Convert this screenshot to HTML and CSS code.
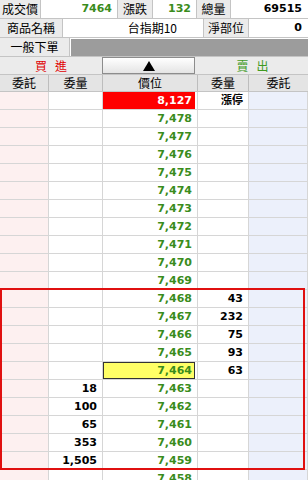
FILE: index.html
```html
<!DOCTYPE html>
<html lang="zh-Hant">
<head>
    <meta charset="UTF-8">
    <meta name="viewport" content="width=device-width, initial-scale=1.0">
    <title>台指期 五檔報價</title>
    <link rel="stylesheet" href="styles.css">
</head>
<body>
    <div class="quote">
        <div class="info-row row-trade">
            <div class="label">成交價</div>
            <div class="value num green">7464</div>
            <div class="label">漲跌</div>
            <div class="value num green">132</div>
            <div class="label">總量</div>
            <div class="value num">69515</div>
        </div>
        <div class="info-row row-product">
            <div class="label">商品名稱</div>
            <div class="value name">台指期10</div>
            <div class="label">淨部位</div>
            <div class="value num">0</div>
        </div>
        <div class="info-row row-order">
            <div class="label">一般下單</div>
            <div class="order-bar"></div>
        </div>
        <div class="side-row">
            <div class="side buy">買&nbsp;&nbsp;&nbsp;進</div>
            <div class="sort-cell"><button class="sort-btn"><span class="arrow-up"></span></button></div>
            <div class="side sell">賣&nbsp;&nbsp;&nbsp;出</div>
        </div>
        <div class="book-head">
            <div>委託</div>
            <div>委量</div>
            <div>價位</div>
            <div>委量</div>
            <div>委託</div>
        </div>

        <div class="book">
            <div class="book-row"><div class="bid-cnt"></div><div class="bid-qty"></div><div class="price"><span class="limit-up">8,127</span></div><div class="ask-qty">漲停</div><div class="ask-cnt"></div></div>
            <div class="book-row"><div class="bid-cnt"></div><div class="bid-qty"></div><div class="price"><span>7,478</span></div><div class="ask-qty"></div><div class="ask-cnt"></div></div>
            <div class="book-row"><div class="bid-cnt"></div><div class="bid-qty"></div><div class="price"><span>7,477</span></div><div class="ask-qty"></div><div class="ask-cnt"></div></div>
            <div class="book-row"><div class="bid-cnt"></div><div class="bid-qty"></div><div class="price"><span>7,476</span></div><div class="ask-qty"></div><div class="ask-cnt"></div></div>
            <div class="book-row"><div class="bid-cnt"></div><div class="bid-qty"></div><div class="price"><span>7,475</span></div><div class="ask-qty"></div><div class="ask-cnt"></div></div>
            <div class="book-row"><div class="bid-cnt"></div><div class="bid-qty"></div><div class="price"><span>7,474</span></div><div class="ask-qty"></div><div class="ask-cnt"></div></div>
            <div class="book-row"><div class="bid-cnt"></div><div class="bid-qty"></div><div class="price"><span>7,473</span></div><div class="ask-qty"></div><div class="ask-cnt"></div></div>
            <div class="book-row"><div class="bid-cnt"></div><div class="bid-qty"></div><div class="price"><span>7,472</span></div><div class="ask-qty"></div><div class="ask-cnt"></div></div>
            <div class="book-row"><div class="bid-cnt"></div><div class="bid-qty"></div><div class="price"><span>7,471</span></div><div class="ask-qty"></div><div class="ask-cnt"></div></div>
            <div class="book-row"><div class="bid-cnt"></div><div class="bid-qty"></div><div class="price"><span>7,470</span></div><div class="ask-qty"></div><div class="ask-cnt"></div></div>
            <div class="book-row"><div class="bid-cnt"></div><div class="bid-qty"></div><div class="price"><span>7,469</span></div><div class="ask-qty"></div><div class="ask-cnt"></div></div>
            <div class="book-row"><div class="bid-cnt"></div><div class="bid-qty"></div><div class="price"><span>7,468</span></div><div class="ask-qty">43</div><div class="ask-cnt"></div></div>
            <div class="book-row"><div class="bid-cnt"></div><div class="bid-qty"></div><div class="price"><span>7,467</span></div><div class="ask-qty">232</div><div class="ask-cnt"></div></div>
            <div class="book-row"><div class="bid-cnt"></div><div class="bid-qty"></div><div class="price"><span>7,466</span></div><div class="ask-qty">75</div><div class="ask-cnt"></div></div>
            <div class="book-row"><div class="bid-cnt"></div><div class="bid-qty"></div><div class="price"><span>7,465</span></div><div class="ask-qty">93</div><div class="ask-cnt"></div></div>
            <div class="book-row"><div class="bid-cnt"></div><div class="bid-qty"></div><div class="price"><span class="last">7,464</span></div><div class="ask-qty">63</div><div class="ask-cnt"></div></div>
            <div class="book-row"><div class="bid-cnt"></div><div class="bid-qty">18</div><div class="price"><span>7,463</span></div><div class="ask-qty"></div><div class="ask-cnt"></div></div>
            <div class="book-row"><div class="bid-cnt"></div><div class="bid-qty">100</div><div class="price"><span>7,462</span></div><div class="ask-qty"></div><div class="ask-cnt"></div></div>
            <div class="book-row"><div class="bid-cnt"></div><div class="bid-qty">65</div><div class="price"><span>7,461</span></div><div class="ask-qty"></div><div class="ask-cnt"></div></div>
            <div class="book-row"><div class="bid-cnt"></div><div class="bid-qty">353</div><div class="price"><span>7,460</span></div><div class="ask-qty"></div><div class="ask-cnt"></div></div>
            <div class="book-row"><div class="bid-cnt"></div><div class="bid-qty">1,505</div><div class="price"><span>7,459</span></div><div class="ask-qty"></div><div class="ask-cnt"></div></div>
            <div class="book-row"><div class="bid-cnt"></div><div class="bid-qty"></div><div class="price"><span>7,458</span></div><div class="ask-qty"></div><div class="ask-cnt"></div></div>

            <!-- five best bid/ask frame -->
            <div class="best-five"></div>
        </div>
    </div>
</body>
</html>
```

FILE: styles.css
```css
* {
    margin: 0;
    padding: 0;
    box-sizing: border-box;
}

body {
    width: 308px;
    height: 480px;
    overflow: hidden;
    background: #ffffff;
    font-family: 'Noto Sans CJK TC', 'DejaVu Sans', sans-serif;
    font-size: 12px;
    color: #000;
}

.quote {
    width: 308px;
}

/* top info rows */
.info-row {
    display: grid;
    height: 19px;
    border-bottom: 1px solid #c4c4c4;
}

.row-trade {
    grid-template-columns: 41px 77px 35px 44px 34px 1fr;
}

.row-product {
    grid-template-columns: 63px 141px 45px 1fr;
}

.row-order {
    grid-template-columns: 70px 1fr;
}

.label {
    background: #ebebeb;
    border-right: 1px solid #c4c4c4;
    text-align: center;
    line-height: 18px;
    white-space: nowrap;
    overflow: hidden;
}

.value {
    background: #ffffff;
    border-right: 1px solid #c4c4c4;
    text-align: right;
    padding-right: 5px;
    line-height: 18px;
    white-space: nowrap;
}

.value:last-child {
    border-right: none;
    padding-right: 6px;
}

.num {
    font-family: 'DejaVu Sans', Verdana, sans-serif;
    font-weight: bold;
    font-size: 11px;
}

.name {
    padding-right: 26px;
}

.green {
    color: #3a8c1c;
}

.order-bar {
    background: #9c9c9c;
    margin: 1px 0 0 1px;
}

/* buy / sell header */
.side-row {
    display: grid;
    grid-template-columns: 102px 95px 1fr;
    height: 18px;
    background: #ebebeb;
    border-bottom: 1px solid #c4c4c4;
}

.side {
    text-align: center;
    line-height: 17px;
}

.buy {
    color: #e00000;
}

.sell {
    color: #3f9a1f;
}

.sort-cell {
    padding-right: 2px;
}

.sort-btn {
    display: flex;
    justify-content: center;
    align-items: center;
    width: 100%;
    height: 17px;
    border: 1px solid #8c8c8c;
    background: linear-gradient(#ffffff, #e4e4e4);
}

.arrow-up {
    width: 0;
    height: 0;
    border-left: 6px solid transparent;
    border-right: 6px solid transparent;
    border-bottom: 10px solid #000;
}

.book-head {
    display: grid;
    grid-template-columns: 49px 54px 95px 51px 1fr;
    height: 17px;
    background: #e4e4e4;
    border-bottom: 1px solid #c4c4c4;
}

.book-head div {
    text-align: center;
    line-height: 16px;
    border-right: 1px solid #bdbdbd;
}

.book-head div:last-child {
    border-right: none;
}

/* order book */
.book {
    position: relative;
}

.book-row {
    display: grid;
    grid-template-columns: 49px 54px 95px 51px 1fr;
    height: 18px;
    border-bottom: 1px solid #d6d6d6;
    font-family: 'DejaVu Sans', Verdana, 'Noto Sans CJK TC', sans-serif;
    font-weight: bold;
    font-size: 11px;
    line-height: 17px;
}

.book-row > div {
    border-right: 1px solid #d6d6d6;
    text-align: right;
    white-space: nowrap;
}

.bid-cnt {
    background: #fdf0f0;
}

.bid-qty {
    padding-right: 5px;
}

.ask-qty {
    padding-right: 5px;
}

.ask-qty:not(:empty) {
    font-family: 'DejaVu Sans', 'Noto Sans CJK TC', sans-serif;
}

.ask-cnt {
    background: #ecf0fb;
}

.price {
    padding-right: 2px;
    color: #3a8c1c;
}

.price span {
    display: block;
    height: 17px;
    padding-right: 3px;
}

.price .limit-up {
    background: #ff0000;
    color: #ffffff;
}

.price .last {
    background: #ffff66;
    border: 1px solid #333;
    line-height: 15px;
    padding-right: 2px;
}

.best-five {
    position: absolute;
    top: 196px;
    left: 0;
    width: 305px;
    height: 182px;
    border: 2px solid #e01010;
}
```
